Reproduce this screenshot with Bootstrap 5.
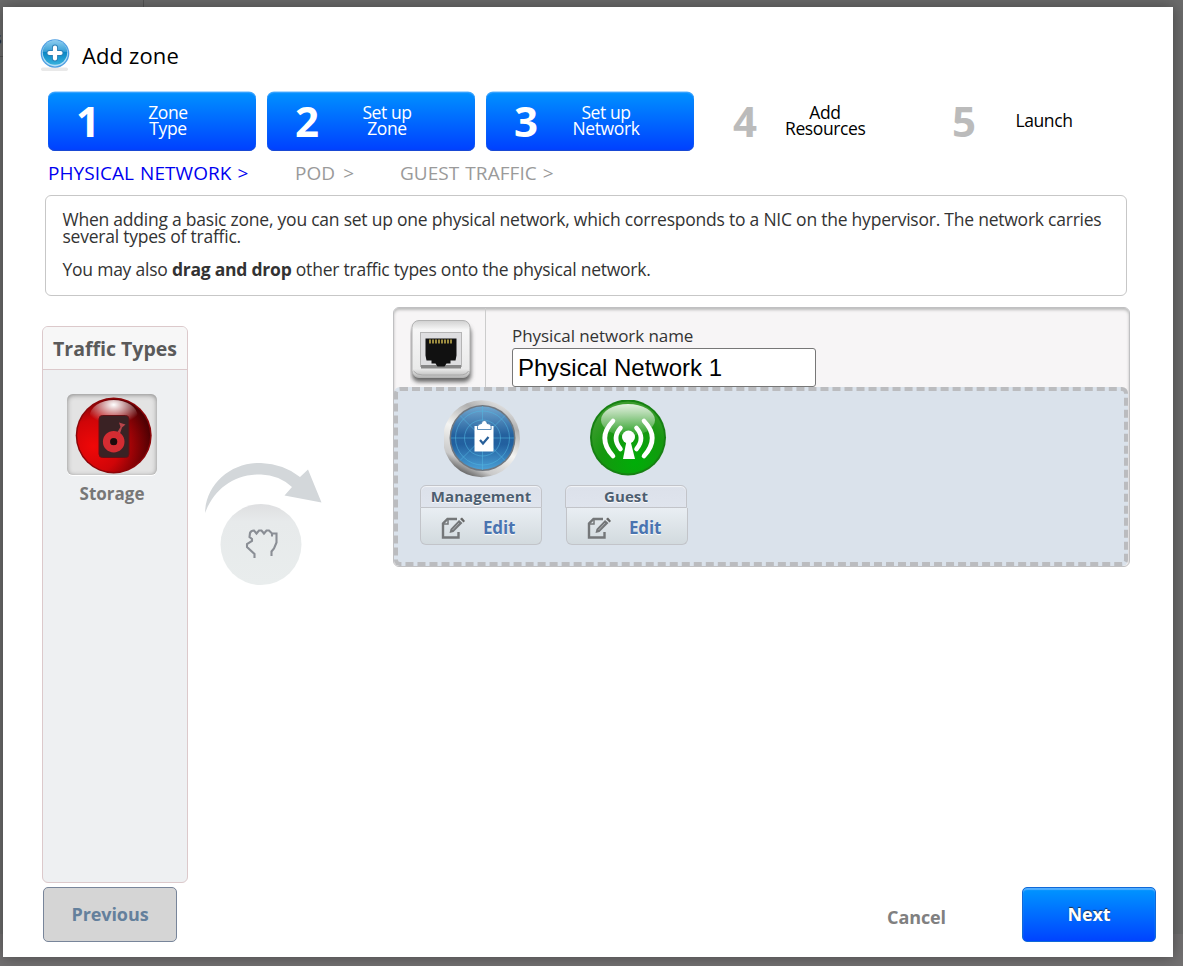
<!DOCTYPE html>
<html lang="en">
<head>
<meta charset="utf-8">
<title>Add zone</title>
<meta name="viewport" content="width=device-width, initial-scale=1">
<link href="https://cdn.jsdelivr.net/npm/bootstrap@5.3.0/dist/css/bootstrap.min.css" rel="stylesheet">
<style>
  html, body { height: 100%; overflow: hidden; }
  body { background: #6b6b6b; font-family: "Open Sans", "Noto Sans", sans-serif; color: #333; padding: 7px 10px 9px 3px; position: relative; }
  .behind-line { position: absolute; background: #555; }
  .behind-floor { position: absolute; left: 0; right: 0; bottom: 0; height: 32px; background: #727071; }
  .behind-text { position: absolute; left: -6px; top: 26px; font-size: 16px; color: #222; }
  .wizard { position: relative; width: 1170px; height: 950px; background: #fff; box-shadow: 0 0 14px rgba(0,0,0,.35); padding: 31px 17px 15px 37px; }
  .wizard svg { display: block; flex: none; }
  .wizard-title { height: 54px; gap: 12px; font-size: 22px; line-height: 34px; letter-spacing: .12px; color: #000; }
  .steps { gap: 11px; padding-left: 8px; }
  .step { width: 208px; height: 59px; border-radius: 7px; color: #000; font-size: 17.5px; line-height: 16px; letter-spacing: -.4px; padding-bottom: 3px; }
  .step.done { background: linear-gradient(#0091ff, #003fff); color: #fff; box-shadow: 0 -.5px 0 #5ab4ff, inset 0 1px 1px #3aa4ff, inset 0 -1px 1px #1c4bd0; }
  .step-no { width: 80px; font-size: 42px; font-weight: 700; line-height: 57px; letter-spacing: 0; color: #bbb; text-align: center; }
  .step.done .step-no { color: #fff; }
  .step-label { width: 80px; text-align: center; white-space: nowrap; }
  .trail { height: 44px; padding-left: 8px; font-size: 19px; line-height: 44px; letter-spacing: .05px; word-spacing: 1px; color: #9a9a9a; white-space: nowrap; }
  .trail .now { color: #0000f0; }
  .intro { width: 1082px; height: 101px; margin-left: 5px; border: 1px solid #c7c7c7; border-radius: 6px; padding: 15px 16px 0 16.5px; font-size: 17.5px; line-height: 17px; letter-spacing: -.232px; white-space: nowrap; }
  .types { width: 146px; height: 557px; margin: 30px 0 0 2px; border: 1px solid #dcc9cb; border-radius: 6px; background: #eef0f2; overflow: hidden; }
  .types-head { height: 43px; line-height: 44px; border-bottom: 1px solid #dcc9cb; background: #f7f7f7; font-size: 19.5px; font-weight: 700; color: #5a5a5a; text-align: center; white-space: nowrap; }
  .type-body { margin-right: 6px; }
  .type-well { width: 90px; height: 81px; margin-top: 24px; border-radius: 6px; background: #e3e3e3; box-shadow: inset 0 1px 5px #888, 0 1px 0 #fff; }
  .type-name { font-size: 17px; font-weight: 700; color: #777; line-height: 38px; }
  .arrow-col { width: 205px; padding: 165px 0 0 16px; }
  .network { width: 737px; height: 260px; margin-top: 11px; border: 1px solid #c0c0c2; border-radius: 6px; background: #f7f5f6; box-shadow: inset 0 2px 3px #bbb; }
  .net-head { height: 79px; }
  .net-icon { width: 92px; border-right: 1px solid #ccc; padding: 10px 0 0 16px; }
  .net-form { padding: 18px 0 0 26px; }
  .net-form label { font-size: 17px; line-height: 19px; height: 22px; letter-spacing: -.07px; display: block; white-space: nowrap; }
  .net-form input { width: 304px; height: 39px; padding: 0 5px; border: 1px solid #777; border-radius: 3px; font-family: "Liberation Sans", Arial, sans-serif; font-size: 24px; color: #000; display: block; }
  .drop { height: 179px; width: 734px; border: 4px dashed #bbbcbf; border-radius: 6px; background: #dae2eb; padding: 9px 0 0 22px; gap: 23px; }
  .traffic { width: 122px; }
  .traffic .ball { margin-left: 24px; }
  .traffic + .traffic .ball { margin-left: 25px; }
  .traffic-name { margin-top: 5px; height: 23px; border: 1px solid #c2c4c9; border-radius: 6px 6px 0 0; background: linear-gradient(#dce1ea, #dfe4ed); box-shadow: inset 0 1px 1px #f3f5f8; font-size: 15px; font-weight: 700; letter-spacing: .12px; color: #4d5e70; line-height: 20px; text-align: center; text-shadow: 0 1px 1px #fff; }
  .traffic-edit { height: 37px; border: 1px solid #c2c4c9; border-top: 0; border-radius: 0 0 6px 6px; background: linear-gradient(#e9eef3, #d2dade); padding: 3px 0 0 20px; gap: 18px; font-size: 17px; font-weight: 700; letter-spacing: -.15px; color: #4a74b0; text-shadow: 0 1px 1px #fff; }
  .bottom { position: relative; margin-top: 4px; padding-left: 3px; height: 55px; }
  .wbtn { width: 134px; height: 55px; border-radius: 5px; font-size: 18px; font-weight: 700; line-height: 53px; letter-spacing: -.1px; text-align: center; padding: 0; }
  .wbtn-prev, .wbtn-prev:hover { background: #d5d5d5; border: 1px solid #78859a; color: #64809c; }
  .wbtn-next, .wbtn-next:hover { background: linear-gradient(#0096ff, #0043ff); border: 1px solid #0f69d8; color: #fff; box-shadow: inset 0 2px 1px #52aeff; text-shadow: 0 -1px 1px #234; }
  .cancel { margin-left: auto; margin-right: 76px; font-size: 18px; font-weight: 700; letter-spacing: -.1px; color: #808080; line-height: 60px; text-decoration: none; }
</style>
</head>
<body>
<div class="behind-floor"></div>
<div class="behind-line" style="left:143px;top:0;width:1px;height:7px"></div>
<div class="behind-line" style="left:0;top:56px;width:3px;height:1px"></div>
<div class="behind-text">s</div>
<main class="wizard d-flex flex-column">
  <header class="wizard-title d-flex">
    <svg width="30" height="34" viewBox="0 0 30 34">
      <defs><linearGradient id="plus" x1="0" y1="0" x2="0" y2="1"><stop offset="0" stop-color="#8ccdf0"/><stop offset=".45" stop-color="#3aa0d6"/><stop offset=".5" stop-color="#0a87c6"/><stop offset="1" stop-color="#35b0dc"/></linearGradient></defs>
      <rect x="1" y="29.500" width="27" height="3.500" rx="1.700" fill="#e9e9e9"/>
      <circle cx="15" cy="15.500" r="14.300" fill="#4f9fe2"/><circle cx="15" cy="15.500" r="12.900" fill="#b5e0f6"/><circle cx="15" cy="14.500" r="12.200" fill="url(#plus)"/>
      <path d="M15 9.500v11M9.500 15h11" stroke="#2a7fb5" stroke-width="6" stroke-linecap="round"/><path d="M15 9.500v11M9.500 15h11" stroke="#fff" stroke-width="4.200" stroke-linecap="round"/>
    </svg>
    <span>Add zone</span>
  </header>
  <nav class="steps d-flex">
    <div class="step done d-flex align-items-center"><span class="step-no">1</span><span class="step-label">Zone<br>Type</span></div>
    <div class="step done d-flex align-items-center"><span class="step-no">2</span><span class="step-label">Set up<br>Zone</span></div>
    <div class="step done d-flex align-items-center"><span class="step-no">3</span><span class="step-label">Set up<br>Network</span></div>
    <div class="step d-flex align-items-center"><span class="step-no">4</span><span class="step-label">Add<br>Resources</span></div>
    <div class="step d-flex align-items-center"><span class="step-no">5</span><span class="step-label">Launch</span></div>
  </nav>
  <nav class="trail d-flex"><span class="now" style="width:247px">PHYSICAL NETWORK &gt;</span><span style="width:105px;word-spacing:3px">POD &gt;</span><span>GUEST TRAFFIC &gt;</span></nav>
  <section class="intro"><p class="mb-3">When adding a basic zone, you can set up one physical network, which corresponds to a NIC on the hypervisor. The network carries<br>several types of traffic.</p><p class="mb-0">You may also <b>drag and drop</b> other traffic types onto the physical network.</p></section>
  <div class="d-flex">
    <aside class="types d-flex flex-column">
      <div class="types-head">Traffic Types</div>
      <div class="type-body d-flex flex-column align-items-center">
        <div class="type-well">
          <svg width="90" height="81" viewBox="0 0 90 81">
            <defs><radialGradient id="red" cx=".22" cy=".65" r=".8"><stop offset="0" stop-color="#f00808"/><stop offset=".45" stop-color="#d00508"/><stop offset="1" stop-color="#4e0003"/></radialGradient><radialGradient id="shine" cx=".5" cy=".15" r=".6"><stop offset="0" stop-color="#fff"/><stop offset="1" stop-color="#fff" stop-opacity="0"/></radialGradient></defs>
            <circle cx="46.700" cy="41.500" r="38" fill="#8c0508"/><circle cx="46.700" cy="41.500" r="36.500" fill="url(#red)"/>
            <ellipse cx="46.700" cy="22" rx="24" ry="16" fill="url(#shine)"/>
            <rect x="32" y="21.500" width="30" height="42" rx="3.500" fill="#3a2224" stroke="#641015"/>
            <path d="M50.500 38l3-5-1.500-4.500 6.500 2-3.500 3-2 6z" fill="#b8444a"/><circle cx="46.700" cy="47.700" r="7.200" fill="none" stroke="#d42c32" stroke-width="7.200"/><circle cx="46.700" cy="47.700" r="3.400" fill="#1c0a0b"/>
          </svg>
        </div>
        <div class="type-name">Storage</div>
      </div>
    </aside>
    <div class="arrow-col">
      <svg width="120" height="125" viewBox="204 461 120 125">
        <defs><linearGradient id="disc" x1="0" y1="0" x2="0" y2="1"><stop offset="0" stop-color="#dedfe1"/><stop offset=".22" stop-color="#e7eaeb"/><stop offset="1" stop-color="#e9eded"/></linearGradient></defs>
        <path d="M205 513C206 483 232 462 261 463Q284 464 300 477L308 469.500 321.500 502.500 284.500 495.500 292 487Q279 475 261 474.500C233 474 214 490 205 513Z" fill="#d3d7da"/>
        <circle cx="261" cy="544.500" r="40.500" fill="url(#disc)"/>
        <path d="M254.500 558v-4l-7.500-7v-3l5-3v-2l-2.500-2 .5-4q1-2.500 4-2.500l2.500 3 2.500-3h2.500l2.500 3 2.500-3h2.500l3 3h4.500v9l-2.500 6-2.500 3v4.500M272 532.500v4" fill="none" stroke="#8a8e95" stroke-width="2.100"/>
      </svg>
    </div>
    <section class="network">
      <div class="net-head d-flex">
        <div class="net-icon">
          <svg width="66" height="68" viewBox="0 0 66 68">
            <defs><linearGradient id="plate" x1="0" y1="0" x2="0" y2="1"><stop offset="0" stop-color="#d0d0d0"/><stop offset=".16" stop-color="#f6f6f6"/><stop offset=".85" stop-color="#eaeaea"/><stop offset="1" stop-color="#b5b5b5"/></linearGradient><filter id="soft" x="-20%" y="-20%" width="140%" height="140%"><feGaussianBlur stdDeviation="2"/></filter></defs>
            <rect x="2" y="8" width="59" height="56" rx="7" fill="#666" filter="url(#soft)"/>
            <rect x="2" y="2.500" width="58" height="57" rx="7" fill="url(#plate)" stroke="#b2b2b2"/><path d="M3.500 53q3 4 9 4h37q7 0 9-4" fill="none" stroke="#aaa"/>
            <rect x="10.500" y="14.500" width="41" height="34" fill="#dedee0" stroke="#b5b5b5"/><path d="M11 47h40v3.500H11z" fill="#888"/>
            <path d="M15.500 20.500h31v17l-1 5h-5v3h-4l-2 3h-7l-2-3h-4v-3h-5l-1-5z" fill="#111"/><path d="M19 23.500h24" stroke="#9c8c40" stroke-width="4" stroke-dasharray="2 1"/>
          </svg>
        </div>
        <div class="net-form"><label for="netname">Physical network name</label><input id="netname" type="text" value="Physical Network 1"></div>
      </div>
      <div class="drop d-flex">
        <div class="traffic">
          <svg class="ball" width="80" height="80" viewBox="0 0 80 80">
            <defs><linearGradient id="ring" x1=".2" y1="1" x2=".7" y2="0"><stop offset="0" stop-color="#333"/><stop offset=".2" stop-color="#c9c9c9"/><stop offset=".5" stop-color="#f4f4f2"/><stop offset=".8" stop-color="#b0b0b0"/><stop offset="1" stop-color="#e5e5e5"/></linearGradient><linearGradient id="blue" x1="0" y1="0" x2="0" y2="1"><stop offset="0" stop-color="#70a6cf"/><stop offset=".45" stop-color="#24619e"/><stop offset=".6" stop-color="#22609f"/><stop offset="1" stop-color="#4a9fd5"/></linearGradient></defs>
            <circle cx="37.500" cy="38.700" r="38.500" fill="url(#ring)"/><circle cx="38.500" cy="38" r="33" fill="#6f7780"/><circle cx="38.500" cy="38" r="31.500" fill="url(#blue)"/>
            <g fill="none" stroke="#52b7e0" stroke-opacity=".55"><circle cx="38.500" cy="38" r="27"/><circle cx="38.500" cy="38" r="18"/><path d="M38.500 6v64M7 38h63M16 15.500l45 45M61 15.500l-45 45"/></g>
            <path d="M30.500 26h19v25.500h-19z" fill="#fff"/><path d="M33.500 29.500v-3q1-3 4-3 0-3 2.800-3t2.800 3q4 0 4 3v3z" fill="#fff" stroke="#3773a8" stroke-width=".8"/><path d="M36 40l3 3.500 5.500-6.500" fill="none" stroke="#275f99" stroke-width="2.200"/>
          </svg>
          <div class="traffic-name">Management</div>
          <div class="traffic-edit d-flex align-items-center"><svg width="24" height="22" viewBox="0 0 24 22"><path d="M17.500 15v5.500H2V6.500L6.500 2H16" fill="none" stroke="#747779" stroke-width="2.400"/><path d="M2 7h5V2" fill="none" stroke="#747779" stroke-width="1.500"/><path d="M8.500 16l1-4L18 3l3.500 3-9 9z" fill="#747779"/><path d="M19 2l2-1.500L24 4l-1.500 1.500z" fill="#666"/><path d="M11.500 13l6.500-7" stroke="#b5b8bd" stroke-width=".8"/></svg><span>Edit</span></div>
        </div>
        <div class="traffic">
          <svg class="ball" width="80" height="80" viewBox="0 0 80 80">
            <defs><radialGradient id="green" cx=".6" cy=".85" r=".8"><stop offset="0" stop-color="#00ad08"/><stop offset=".6" stop-color="#15970f"/><stop offset="1" stop-color="#3c9c2e"/></radialGradient><linearGradient id="gloss" x1="0" y1="0" x2="0" y2="1"><stop offset="0" stop-color="#fff" stop-opacity=".85"/><stop offset="1" stop-color="#fff" stop-opacity=".08"/></linearGradient></defs>
            <circle cx="38" cy="37.500" r="38" fill="#168012"/><circle cx="38" cy="37.500" r="36" fill="url(#green)"/><ellipse cx="38" cy="20" rx="27" ry="16" fill="url(#gloss)"/>
            <circle cx="38.500" cy="37" r="6.500" fill="#fff"/><path d="M36.500 41h4l4.500 18h-12z" fill="#fff"/>
            <g fill="none" stroke="#fff" stroke-width="4.600" stroke-linecap="round"><path d="M30.500 28Q21.500 38 30.500 49M46.500 28Q55.500 38 46.500 49M23 21Q6.500 38 23 56M54 21Q70.500 38 54 56"/></g>
          </svg>
          <div class="traffic-name">Guest</div>
          <div class="traffic-edit d-flex align-items-center" style="margin-left:1px;margin-right:-1px"><svg width="24" height="22" viewBox="0 0 24 22"><path d="M17.500 15v5.500H2V6.500L6.500 2H16" fill="none" stroke="#747779" stroke-width="2.400"/><path d="M2 7h5V2" fill="none" stroke="#747779" stroke-width="1.500"/><path d="M8.500 16l1-4L18 3l3.500 3-9 9z" fill="#747779"/><path d="M19 2l2-1.500L24 4l-1.500 1.500z" fill="#666"/><path d="M11.500 13l6.500-7" stroke="#b5b8bd" stroke-width=".8"/></svg><span>Edit</span></div>
        </div>
      </div>
    </section>
  </div>
  <footer class="bottom d-flex"><button class="wbtn wbtn-prev">Previous</button><a class="cancel">Cancel</a><button class="wbtn wbtn-next">Next</button></footer>
</main>
<script src="https://cdn.jsdelivr.net/npm/bootstrap@5.3.0/dist/js/bootstrap.bundle.min.js"></script>
</body>
</html>
